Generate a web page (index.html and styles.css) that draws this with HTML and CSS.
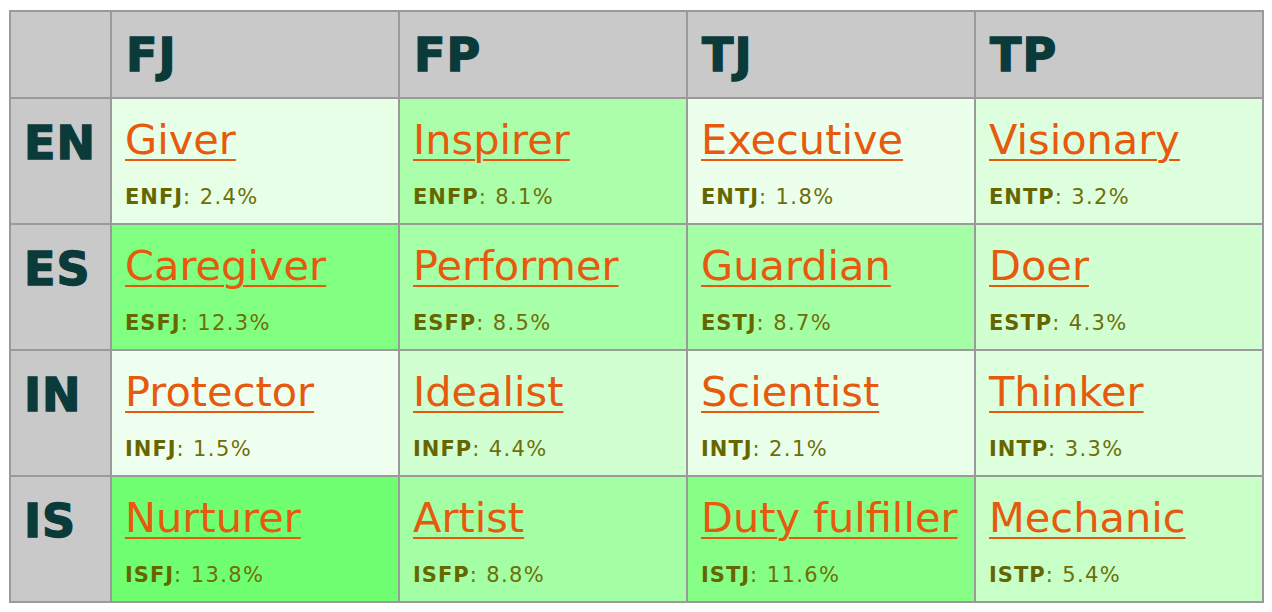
FILE: index.html
```html
<!DOCTYPE html>
<html>
<head>
<meta charset="utf-8">
<link rel="stylesheet" href="styles.css">
</head>
<body>
<table class="grid">
  <colgroup>
    <col class="c-head"><col class="c-data"><col class="c-data"><col class="c-data"><col class="c-data">
  </colgroup>
  <tr class="hrow">
    <th class="corner"></th><th>FJ</th><th>FP</th><th>TJ</th><th>TP</th>
  </tr>
  <tr class="drow">
    <th>EN</th>
    <td style="background:#e6ffe6"><a href="#">Giver</a><div class="pct"><b>ENFJ</b>: 2.4%</div></td>
    <td style="background:#abffab"><a href="#">Inspirer</a><div class="pct"><b>ENFP</b>: 8.1%</div></td>
    <td style="background:#ecffec"><a href="#">Executive</a><div class="pct"><b>ENTJ</b>: 1.8%</div></td>
    <td style="background:#deffde"><a href="#">Visionary</a><div class="pct"><b>ENTP</b>: 3.2%</div></td>
  </tr>
  <tr class="drow">
    <th>ES</th>
    <td style="background:#80ff80"><a href="#">Caregiver</a><div class="pct"><b>ESFJ</b>: 12.3%</div></td>
    <td style="background:#a7ffa7"><a href="#">Performer</a><div class="pct"><b>ESFP</b>: 8.5%</div></td>
    <td style="background:#a5ffa5"><a href="#">Guardian</a><div class="pct"><b>ESTJ</b>: 8.7%</div></td>
    <td style="background:#d2ffd2"><a href="#">Doer</a><div class="pct"><b>ESTP</b>: 4.3%</div></td>
  </tr>
  <tr class="drow">
    <th>IN</th>
    <td style="background:#efffef"><a href="#">Protector</a><div class="pct"><b>INFJ</b>: 1.5%</div></td>
    <td style="background:#d1ffd1"><a href="#">Idealist</a><div class="pct"><b>INFP</b>: 4.4%</div></td>
    <td style="background:#e9ffe9"><a href="#">Scientist</a><div class="pct"><b>INTJ</b>: 2.1%</div></td>
    <td style="background:#ddffdd"><a href="#">Thinker</a><div class="pct"><b>INTP</b>: 3.3%</div></td>
  </tr>
  <tr class="drow">
    <th>IS</th>
    <td style="background:#70ff70"><a href="#">Nurturer</a><div class="pct"><b>ISFJ</b>: 13.8%</div></td>
    <td style="background:#a4ffa4"><a href="#">Artist</a><div class="pct"><b>ISFP</b>: 8.8%</div></td>
    <td style="background:#87ff87"><a href="#">Duty fulfiller</a><div class="pct"><b>ISTJ</b>: 11.6%</div></td>
    <td style="background:#c7ffc7"><a href="#">Mechanic</a><div class="pct"><b>ISTP</b>: 5.4%</div></td>
  </tr>
</table>
</body>
</html>
```

FILE: styles.css
```css
html, body {
  background: #ffffff;
}
body {
  margin: 10px 0 0 9px;
  font-family: "DejaVu Sans", Verdana, sans-serif;
}
.grid {
  border-collapse: collapse;
  table-layout: fixed;
  width: 1253px;
}
.c-head { width: 101px; }
.c-data { width: 288px; }
.grid th, .grid td {
  border: 2px solid #9a9a9a;
  vertical-align: top;
  text-align: left;
}
.grid th {
  background: #c9c9c9;
  color: #0b3a3a;
  font-weight: bold;
  font-size: 46px;
  line-height: 54px;
  -webkit-text-stroke: 1.4px #0b3a3a;
  letter-spacing: 1px;
}
.hrow th {
  height: 87px;
  box-sizing: border-box;
  padding: 16px 0 0 14px;
}
.drow th {
  padding: 17px 0 0 13px;
}
.drow td {
  height: 126px;
  box-sizing: border-box;
  padding: 16px 0 0 13px;
}
.grid a {
  display: inline-block;
  font-size: 41.5px;
  line-height: 50px;
  color: #e65a0e;
  text-decoration: underline;
  text-decoration-thickness: 2px;
  text-underline-offset: 5px;
  white-space: nowrap;
}
.pct {
  margin-top: 20px;
  font-size: 21px;
  line-height: 24px;
  letter-spacing: 1.4px;
  color: #6e6e08;
  white-space: nowrap;
}
.pct b {
  color: #666600;
  letter-spacing: 1px;
}
```
